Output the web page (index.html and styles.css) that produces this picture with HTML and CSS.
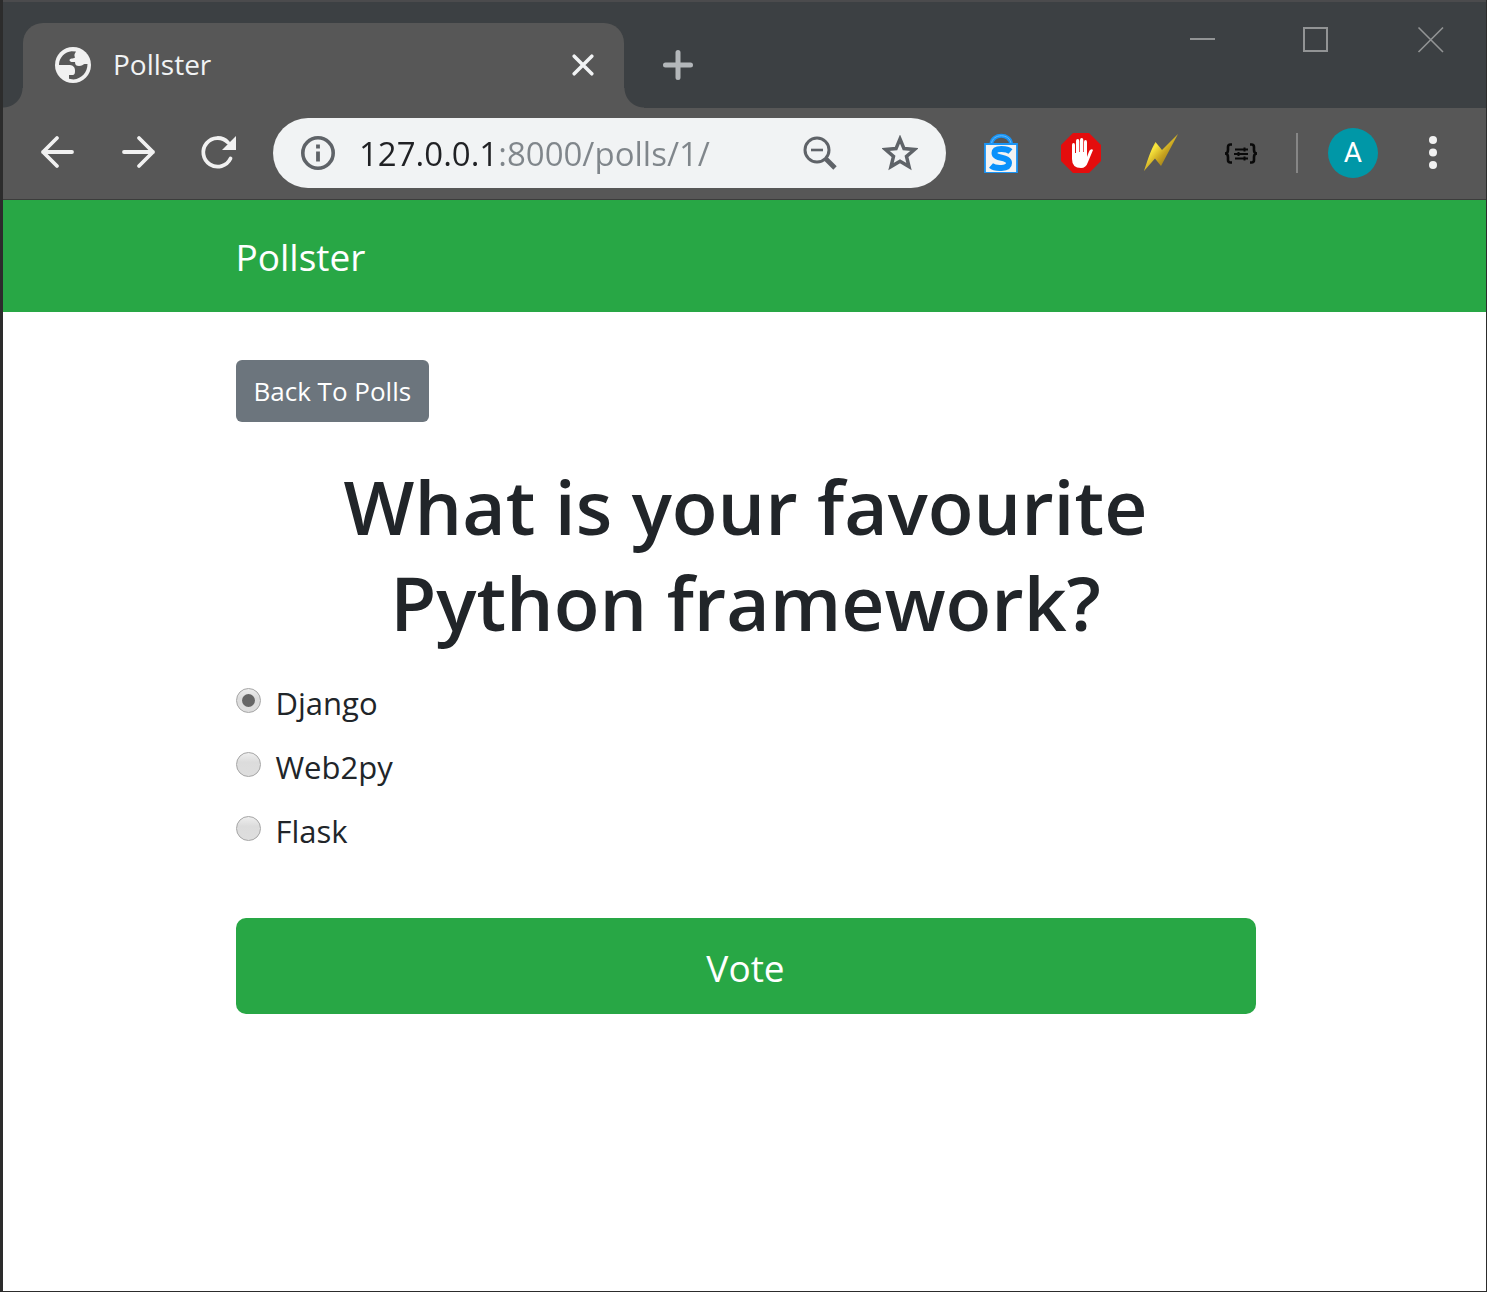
FILE: index.html
```html
<!DOCTYPE html>
<html lang="en">
<head>
<meta charset="utf-8">
<meta name="viewport" content="width=device-width, initial-scale=1">
<title>Pollster</title>
<link rel="stylesheet" href="styles.css">
</head>
<body>
<div class="window">
  <header class="tabstrip">
    <div class="tab">
      <svg class="favicon" viewBox="0 0 36 36" aria-hidden="true">
        <circle cx="18" cy="18" r="18" fill="#f1f1f1"/>
        <path d="M4 17C4.500 10 10 5 16.500 4.200L21 4.500C20.500 6 19 7 19.500 9L20 10.500C18 12 15 11 14.500 13C14.500 14.500 16 15 17.500 15H20C20 18 21.500 19 24 19C27 19 28 17.500 29.500 17L32.500 17C32.500 25 27 31.500 18.500 32.500L14 31.800V28H17C20 28 20 26 20 23.500C20 20 18 18.500 15 18H4Z" fill="#575757"/>
      </svg>
      <span class="tab-title">Pollster</span>
      <button class="tab-close" type="button" aria-label="Close tab">
        <svg viewBox="0 0 20 20"><path d="M2 2 18 18M18 2 2 18" stroke="#f1f3f4" stroke-width="3.200" stroke-linecap="round"/></svg>
      </button>
    </div>
    <button class="new-tab" type="button" aria-label="New tab">
      <svg viewBox="0 0 30 30"><path d="M15 2.500V27.500M2.500 15H27.500" stroke="#b3b7ba" stroke-width="5" stroke-linecap="round"/></svg>
    </button>
    <div class="window-controls">
      <button type="button" aria-label="Minimize"><svg viewBox="0 0 26 26"><path d="M0 12H25" stroke="#929495" stroke-width="2"/></svg></button>
      <button type="button" aria-label="Maximize"><svg viewBox="0 0 26 26"><path d="M0 1H23V24H0Z" fill="none" stroke="#929495" stroke-width="2"/></svg></button>
      <button type="button" aria-label="Close"><svg viewBox="0 0 26 26"><path d="M.5 .5 25 25M25 .5 .5 25" stroke="#929495" stroke-width="1.600"/></svg></button>
    </div>
  </header>

  <div class="toolbar">
    <nav class="history" aria-label="History">
      <button type="button" aria-label="Back"><svg viewBox="0 0 36 36"><path d="M32 17H3M17 3 3 17 17 31" fill="none" stroke="#f1f1f1" stroke-width="3.800" stroke-linecap="round" stroke-linejoin="round"/></svg></button>
      <button type="button" aria-label="Forward"><svg viewBox="0 0 36 36"><path d="M4 17H33M19 3 33 17 19 31" fill="none" stroke="#f1f1f1" stroke-width="3.800" stroke-linecap="round" stroke-linejoin="round"/></svg></button>
      <button type="button" aria-label="Reload"><svg viewBox="0 0 36 36"><path d="M30.500 23.500A14.300 14.300 0 1 1 28 7.500" fill="none" stroke="#f1f1f1" stroke-width="3.800" stroke-linecap="round"/><path d="M36 1V15H22Z" fill="#f1f1f1"/></svg></button>
    </nav>

    <div class="omnibox">
      <svg class="info" viewBox="0 0 34 34" aria-hidden="true"><circle cx="17" cy="17" r="15.200" fill="none" stroke="#5f6368" stroke-width="3.600"/><path d="M17 8.500V12.500M17 15.500V25.500" stroke="#5f6368" stroke-width="3.800"/></svg>
      <input class="address" type="text" value="127.0.0.1:8000/polls/1/" aria-label="Address" spellcheck="false">
      <button type="button" aria-label="Zoom"><svg viewBox="0 0 36 36"><circle cx="15" cy="15" r="12" fill="none" stroke="#5f6368" stroke-width="3"/><path d="M9 15H21" stroke="#5f6368" stroke-width="2.600"/><path d="M24 24 33 33" stroke="#5f6368" stroke-width="4.800"/></svg></button>
      <button type="button" aria-label="Bookmark this page"><svg viewBox="0 0 36 36"><path d="M18 4 22 13.600 32.500 14.500 24.500 21.400 27 31.600 18 26.200 9 31.600 11.500 21.400 3.500 14.500 14 13.600Z" fill="none" stroke="#5f6368" stroke-width="3.500"/></svg></button>
    </div>

    <div class="extensions">
      <button type="button" aria-label="Shopping bag"><svg viewBox="0 0 40 40"><path d="M10.500 11C11 0 29.500 0 30 11" fill="none" stroke="#1a94f5" stroke-width="4"/><path d="M10.500 11C11 0 29.500 0 30 11" fill="none" stroke="#62b9fb" stroke-width="1"/><path d="M4 11H36V40H4Z" fill="#f3f3f3" stroke="#1a94f5" stroke-width="1.800"/><path d="M29.500 18.500C26 15.500 13.500 14.500 13.500 20C13.500 26.500 28 23 28 30C28 36.500 14 36 10 32.500" fill="none" stroke="#0a91fb" stroke-width="6"/></svg></button>
      <button type="button" aria-label="Ad blocker"><svg viewBox="0 0 40 40"><path d="M12 0H28L40 12V28L28 40H12L0 28V12Z" fill="#e40d0d"/><path d="M11 22V12Q11 10 12.500 10T14 12V20H15V8Q15 6 16.700 6T18.300 8V19H19V7Q19 5 20.700 5T22.300 7V19H23V9Q23 7 24.500 7T26 9V24Q28 18 29 17Q31 15.500 32 17L27 29Q25 35 20 35Q11 35 11 26Z" fill="#fff"/></svg></button>
      <button type="button" aria-label="Lightning"><svg viewBox="0 0 40 40"><defs><linearGradient id="bolt" x1="0" y1="0" x2="1" y2="1"><stop offset="0" stop-color="#8c7020"/><stop offset=".33" stop-color="#fbe83e"/><stop offset=".55" stop-color="#c8a420"/><stop offset=".8" stop-color="#8d701b"/></linearGradient></defs><path d="M37 1 20 33 14 25.500 3 38C6 29 10 16 14.500 9L21 17Z" fill="url(#bolt)"/></svg></button>
      <button type="button" aria-label="JSON tools"><svg viewBox="0 0 40 40"><path d="M11 11.500H9.500Q7 11.500 7 14V17Q7 20.500 4 20.500Q7 20.500 7 24V27Q7 29.500 9.500 29.500H11M29 11.500H30.500Q33 11.500 33 14V17Q33 20.500 36 20.500Q33 20.500 33 24V27Q33 29.500 30.500 29.500H29" fill="none" stroke="#090909" stroke-width="2.600"/><path d="M14 16.500H27M13 21H27M14 25.500H27M23.500 14.500V18.500M17.500 19V23M23.500 23.500V27.500" stroke="#090909" stroke-width="2"/></svg></button>
    </div>
    <span class="divider"></span>
    <button class="avatar" type="button" aria-label="Profile A">A</button>
    <button class="menu" type="button" aria-label="Menu"><svg viewBox="0 0 36 36"><g fill="#f1f1f1"><circle cx="18" cy="5" r="4"/><circle cx="18" cy="17.500" r="4"/><circle cx="18" cy="30" r="4"/></g></svg></button>
  </div>

  <div class="page">
    <nav class="navbar"><div class="container"><a class="brand" href="#">Pollster</a></div></nav>
    <main class="container">
      <a class="btn-back" href="#">Back To Polls</a>
      <h1>What is your favourite Python framework?</h1>
      <form>
        <div class="form-check"><input type="radio" name="choice" id="choice1" checked><label for="choice1">Django</label></div>
        <div class="form-check"><input type="radio" name="choice" id="choice2"><label for="choice2">Web2py</label></div>
        <div class="form-check"><input type="radio" name="choice" id="choice3"><label for="choice3">Flask</label></div>
        <button class="btn-vote" type="button">Vote</button>
      </form>
    </main>
  </div>
</div>
</body>
</html>
```
FILE: styles.css
```css
* { box-sizing: border-box; }

body {
  margin: 0;
  background: #fff;
  color: #212529;
  font-family: "Open Sans", "Noto Sans", sans-serif;
}

button {
  flex: none;
  margin: 0;
  padding: 0;
  border: 0;
  background: none;
  color: inherit;
  font: inherit;
  cursor: pointer;
}

svg { display: block; }

.window {
  display: flex;
  flex-direction: column;
  min-height: 100vh;
  border: solid #2c2c2c;
  border-width: 0 1px 1px 3px;
}

/* Tab strip */
.tabstrip {
  display: flex;
  align-items: flex-end;
  height: 108px;
  padding-left: 20px;
  border-top: 2px solid #4b4b4d;
  background: #3c4043;
}

.tab {
  position: relative;
  display: flex;
  align-items: center;
  flex: 0 1 601px;
  height: 85px;
  padding: 0 30px 2px 32px;
  border-radius: 20px 20px 0 0;
  background: #575757;
}

.tab::before,
.tab::after {
  content: "";
  position: absolute;
  bottom: 0;
  width: 20px;
  height: 20px;
}

.tab::before {
  right: 100%;
  background: radial-gradient(circle at 0 0, transparent 19px, #575757 20px);
}

.tab::after {
  left: 100%;
  background: radial-gradient(circle at 100% 0, transparent 19px, #575757 20px);
}

.favicon { width: 36px; height: 36px; }

.tab-title {
  flex: 1;
  margin-left: 22px;
  padding-bottom: 2px;
  color: #f1f3f4;
  font-size: 28px;
  line-height: 40px;
}

.tab-close svg { width: 22px; height: 22px; }

.new-tab {
  align-self: center;
  margin: 20px 0 0 38px;
}

.new-tab svg { width: 32px; height: 30px; }

.window-controls {
  display: flex;
  align-self: flex-start;
  margin-left: auto;
}

.window-controls button {
  display: grid;
  place-items: center;
  width: 114px;
  height: 76px;
  padding-left: 4px;
}

.window-controls svg {
  width: 26px;
  height: 26px;
  overflow: visible;
}

/* Toolbar */
.toolbar {
  display: flex;
  align-items: center;
  height: 92px;
  padding: 0 35px 2px 37px;
  border-bottom: 1px solid #3c3c3c;
  background: #575757;
}

.toolbar svg { width: 36px; height: 36px; }

.history { display: flex; gap: 44px; }

.omnibox {
  display: flex;
  align-items: center;
  flex: 1;
  min-width: 0;
  gap: 44px;
  height: 70px;
  margin-left: 37px;
  padding: 0 28px;
  border-radius: 35px;
  background: #f1f3f4;
}

.omnibox .info {
  flex: none;
  width: 34px;
  height: 34px;
  margin-right: -20px;
}

/* The host part of the address is darker than the port and path. */
.address {
  flex: 1;
  min-width: 0;
  padding: 2px 0 0;
  border: 0;
  outline: 0;
  background: linear-gradient(90deg, #202124 139px, #80868b 139px);
  background-clip: text;
  -webkit-background-clip: text;
  color: #202124;
  -webkit-text-fill-color: transparent;
  font-family: inherit;
  font-size: 33px;
  line-height: 48px;
}

.extensions {
  display: flex;
  gap: 40px;
  margin-left: 35px;
}

.extensions svg { width: 40px; height: 40px; }

.divider {
  flex: none;
  width: 2px;
  height: 40px;
  margin: 0 30px 0 35px;
  background: #868686;
}

.avatar {
  width: 50px;
  height: 50px;
  margin-right: 37px;
  border-radius: 50%;
  background: #0097a7;
  color: #fff;
  font-family: Roboto, sans-serif;
  font-size: 28px;
}

/* Page */
.page {
  flex: 1;
  padding-bottom: 48px;
  background: #fff;
}

.container {
  width: 100%;
  max-width: 1082px;
  margin: 0 auto;
  padding: 0 30px 0 32px;
}

.navbar {
  margin-bottom: 48px;
  padding: 29px 0 27px;
  background: #28a745;
}

.brand {
  display: inline-block;
  color: #fff;
  font-size: 37px;
  line-height: 56px;
  text-decoration: none;
  vertical-align: top;
}

.btn-back {
  display: inline-block;
  padding: 10px 18px;
  border-radius: 6px;
  background: #6c757d;
  color: #fff;
  font-size: 26px;
  line-height: 42px;
  text-decoration: none;
  vertical-align: top;
}

h1 {
  margin: 36px 0 28px;
  font-size: 75px;
  font-weight: 600;
  line-height: 96px;
  text-align: center;
}

.form-check {
  display: flex;
  align-items: center;
  gap: 15px;
  margin-bottom: 14px;
}

.form-check label {
  font-size: 31px;
  line-height: 50px;
}

.form-check input {
  appearance: none;
  display: grid;
  place-items: center;
  width: 25px;
  height: 25px;
  margin: 0 0 5px;
  border: 1px solid #a5a5a5;
  border-radius: 50%;
  background: linear-gradient(#eee, #dcdcdc 40%, #dedede);
}

.form-check input:checked::before {
  content: "";
  width: 13px;
  height: 13px;
  border-radius: 50%;
  background: #666;
}

.btn-vote {
  display: block;
  width: 100%;
  margin-top: 62px;
  padding: 22px 32px 18px;
  border-radius: 10px;
  background: #28a745;
  color: #fff;
  font-size: 37px;
  line-height: 56px;
}
```
